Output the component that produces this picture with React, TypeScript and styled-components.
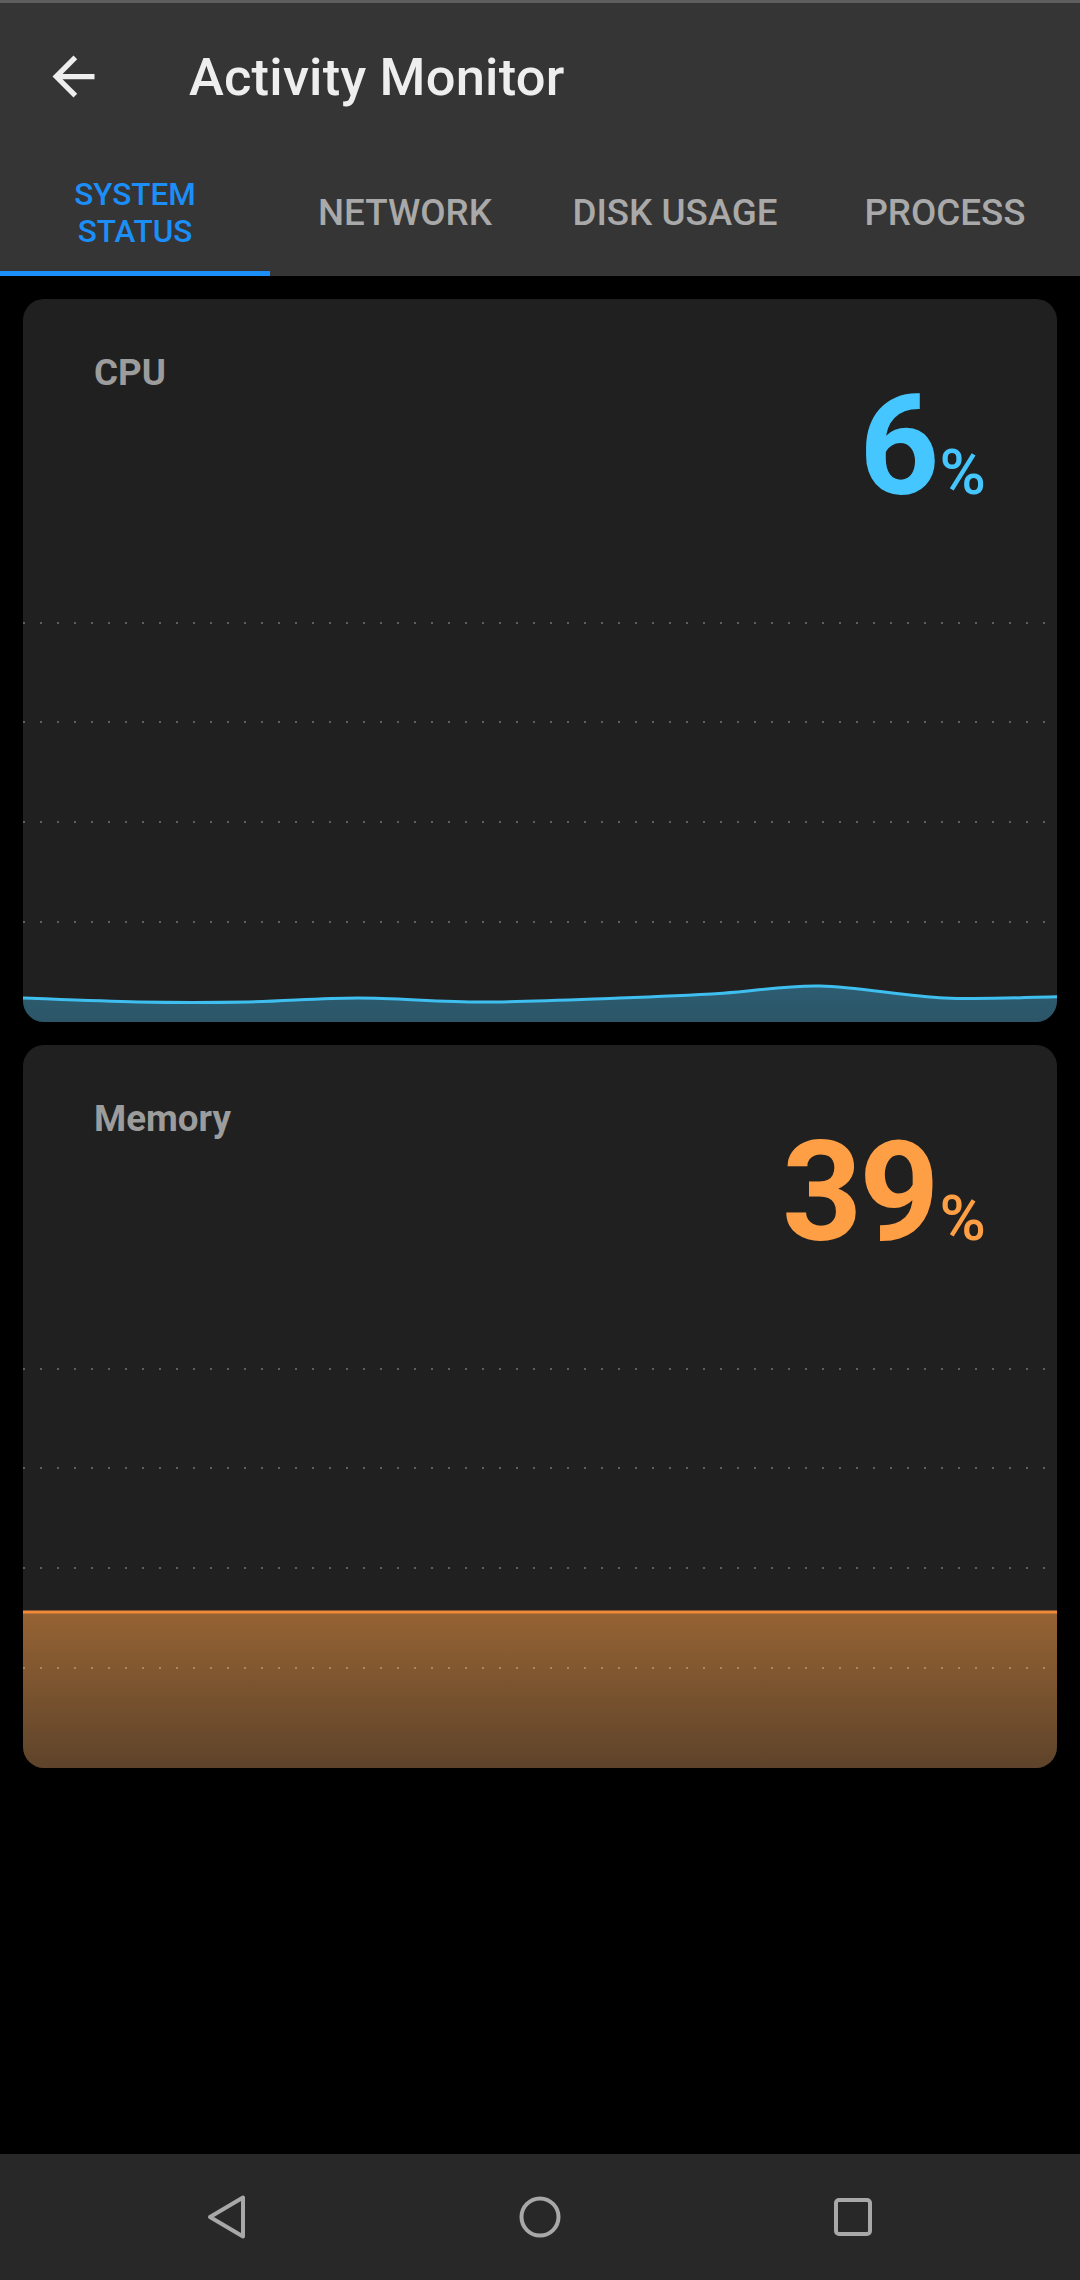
import React from "react";
import styled, { createGlobalStyle } from "styled-components";

type Point = [number, number];

interface Metric {
  label: string;
  value: number;
  color: string;
  lineColor: string;
  fillTop: number;
  fillBottom: number;
  history: Point[];
}

const CHART_W = 1034;
const CHART_H = 400;

const tabs = ["SYSTEM\nSTATUS", "NETWORK", "DISK USAGE", "PROCESS"];

const metrics: Metric[] = [
  {
    label: "CPU",
    value: 6,
    color: "#45c6ff",
    lineColor: "#3fbff0",
    fillTop: 0.36,
    fillBottom: 0.32,
    history: [
      [0, 6],
      [0.111, 5],
      [0.218, 5],
      [0.324, 6],
      [0.444, 5],
      [0.577, 6],
      [0.677, 7.2],
      [0.771, 9],
      [0.891, 6],
      [1, 6.3]
    ]
  },
  {
    label: "Memory",
    value: 39,
    color: "#ff9f45",
    lineColor: "#f08a38",
    fillTop: 0.53,
    fillBottom: 0.28,
    history: [
      [0, 39],
      [1, 39]
    ]
  }
];

function toXY([x, pct]: Point): Point {
  return [x * CHART_W, CHART_H - (pct / 100) * CHART_H];
}

// catmull-rom through the samples, as bezier segments
function smoothPath(samples: Point[]) {
  const pts = samples.map(toXY);
  let d = `M${pts[0][0]},${pts[0][1]}`;
  for (let i = 0; i < pts.length - 1; i++) {
    const p0 = pts[i - 1] || pts[i];
    const p1 = pts[i];
    const p2 = pts[i + 1];
    const p3 = pts[i + 2] || p2;
    const c1x = p1[0] + (p2[0] - p0[0]) / 6;
    const c1y = p1[1] + (p2[1] - p0[1]) / 6;
    const c2x = p2[0] - (p3[0] - p1[0]) / 6;
    const c2y = p2[1] - (p3[1] - p1[1]) / 6;
    d += ` C${c1x},${c1y} ${c2x},${c2y} ${p2[0]},${p2[1]}`;
  }
  return d;
}

function hexToRgb(hex: string) {
  const n = parseInt(hex.slice(1), 16);
  return `${(n >> 16) & 255},${(n >> 8) & 255},${n & 255}`;
}

function Chart({ metric }: { metric: Metric }) {
  const line = smoothPath(metric.history);
  const area = `${line} L${CHART_W},${CHART_H} L0,${CHART_H} Z`;
  const rgb = hexToRgb(metric.color);
  const id = `fill-${metric.label}`;
  return (
    <ChartSvg viewBox={`0 0 ${CHART_W} ${CHART_H}`} preserveAspectRatio="none">
      <defs>
        <linearGradient id={id} x1="0" y1="0" x2="0" y2="1">
          <stop offset="0" stopColor={`rgba(${rgb},${metric.fillTop})`} />
          <stop offset="1" stopColor={`rgba(${rgb},${metric.fillBottom})`} />
        </linearGradient>
      </defs>
      <path d={area} fill={`url(#${id})`} />
      <path d={line} fill="none" stroke={metric.lineColor} strokeWidth={3} />
      {[1, 100, 200, 300].map((y) => (
        <line
          key={y}
          x1={0}
          x2={CHART_W}
          y1={y}
          y2={y}
          stroke="rgba(255,255,255,0.28)"
          strokeWidth={2}
          strokeDasharray="2 15"
        />
      ))}
    </ChartSvg>
  );
}

function MetricCard({ metric }: { metric: Metric }) {
  return (
    <Card>
      <CardHeader>
        <CardLabel>{metric.label}</CardLabel>
        <Reading $color={metric.color}>
          <Value>{metric.value}</Value>
          <Percent>%</Percent>
        </Reading>
      </CardHeader>
      <Chart metric={metric} />
    </Card>
  );
}

export default function App() {
  return (
    <>
      <GlobalStyle />
      <Screen>
        <StatusLine />
        <AppBar>
          <Toolbar>
            <BackButton aria-label="Back">
              <svg width="63" height="63" viewBox="0 0 24 24">
                <path
                  fill="#eeeeee"
                  d="M20 11H7.83l5.59-5.59L12 4l-8 8 8 8 1.41-1.41L7.83 13H20v-2z"
                />
              </svg>
            </BackButton>
            <Title>Activity Monitor</Title>
          </Toolbar>
          <TabRow>
            {tabs.map((tab, index) => (
              <Tab key={tab} $active={index === 0}>
                {tab}
              </Tab>
            ))}
          </TabRow>
        </AppBar>
        <Content>
          {metrics.map((m) => (
            <MetricCard key={m.label} metric={m} />
          ))}
        </Content>
        <NavBar>
          <NavButton aria-label="Back">
            <svg width="60" height="60" viewBox="0 0 60 60">
              <path
                d="M13 30 L46 10.5 L46 49.5 Z"
                fill="none"
                stroke="#a8a8a8"
                strokeWidth={4}
                strokeLinejoin="round"
              />
            </svg>
          </NavButton>
          <NavButton aria-label="Home">
            <svg width="60" height="60" viewBox="0 0 60 60">
              <circle cx="30" cy="30" r="18.5" fill="none" stroke="#a8a8a8" strokeWidth={4} />
            </svg>
          </NavButton>
          <NavButton aria-label="Recents">
            <svg width="60" height="60" viewBox="0 0 60 60">
              <rect
                x="13"
                y="13"
                width="34"
                height="34"
                rx="3"
                fill="none"
                stroke="#a8a8a8"
                strokeWidth={4}
              />
            </svg>
          </NavButton>
        </NavBar>
      </Screen>
    </>
  );
}

const GlobalStyle = createGlobalStyle`
  html, body {
    margin: 0;
    padding: 0;
    background: #000;
  }
  body {
    font-family: Roboto, "Noto Sans", sans-serif;
  }
`;

const Screen = styled.div`
  width: 1080px;
  height: 2280px;
  display: flex;
  flex-direction: column;
  background: #000;
`;

const StatusLine = styled.div`
  height: 3px;
  background: #5e5e5e;
`;

const AppBar = styled.header`
  background: #353535;
`;

const Toolbar = styled.div`
  height: 147px;
  display: flex;
  align-items: center;
`;

const BackButton = styled.div`
  width: 63px;
  height: 63px;
  margin-left: 42px;
  display: flex;
  svg {
    display: block;
  }
`;

const Title = styled.h1`
  margin: 0 0 0 84px;
  font-size: 52.5px;
  font-weight: 500;
  color: #eeeeee;
  letter-spacing: 0.2px;
`;

const TabRow = styled.nav`
  height: 126px;
  display: grid;
  grid-template-columns: repeat(4, 1fr);
`;

const Tab = styled.div<{ $active: boolean }>`
  display: flex;
  align-items: center;
  justify-content: center;
  text-align: center;
  white-space: pre-line;
  font-weight: 500;
  font-size: ${(p) => (p.$active ? "31.5px" : "36.75px")};
  line-height: ${(p) => (p.$active ? "37px" : "1")};
  color: ${(p) => (p.$active ? "#1b8ef8" : "#a9a9a9")};
  border-bottom: 5px solid ${(p) => (p.$active ? "#1b8ef8" : "transparent")};
  padding-top: 5px;
`;

const Content = styled.main`
  flex: 1;
  display: flex;
  flex-direction: column;
  gap: 23px;
  padding: 23px;
`;

const Card = styled.section`
  height: 723px;
  display: flex;
  flex-direction: column;
  background: #202020;
  border-radius: 21px;
  overflow: hidden;
`;

const CardHeader = styled.div`
  display: flex;
  justify-content: space-between;
  align-items: flex-start;
  padding: 56px 71px 0;
`;

const CardLabel = styled.h2`
  margin: 0;
  font-size: 36.75px;
  line-height: 1;
  font-weight: 700;
  color: #9c9c9c;
`;

const Reading = styled.div<{ $color: string }>`
  margin-top: 21px;
  display: flex;
  align-items: baseline;
  color: ${(p) => p.$color};
  line-height: 1;
`;

const Value = styled.span`
  font-size: 140px;
  font-weight: 700;
  letter-spacing: -3px;
`;

const Percent = styled.span`
  font-size: 63px;
  font-weight: 500;
  margin-left: 3px;
`;

const ChartSvg = styled.svg`
  display: block;
  margin-top: auto;
  width: 100%;
  height: 400px;
`;

const NavBar = styled.footer`
  height: 126px;
  background: #282828;
  display: flex;
  align-items: center;
  justify-content: center;
  gap: 253px;
`;

const NavButton = styled.div`
  width: 60px;
  height: 60px;
  svg {
    display: block;
  }
`;
